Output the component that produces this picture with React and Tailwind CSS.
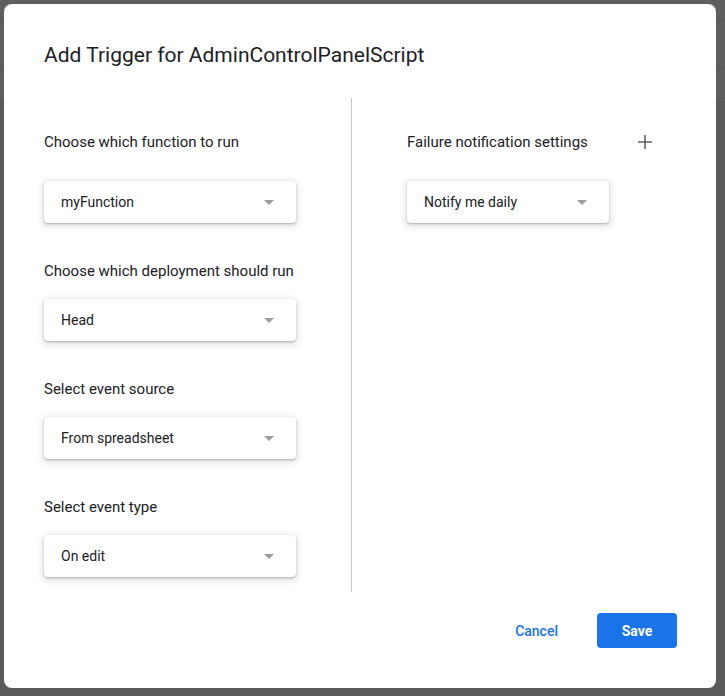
import React from "react";

const fields = [
  { label: "Choose which function to run", value: "myFunction" },
  { label: "Choose which deployment should run", value: "Head" },
  { label: "Select event source", value: "From spreadsheet" },
  { label: "Select event type", value: "On edit" },
];

function Select({ value, width }) {
  return (
    <div
      className={`flex h-[42px] ${width} items-center justify-between rounded-[4px] bg-white pl-[17px] pr-[22px] shadow-[0_1px_2px_rgba(60,64,67,0.3),0_2px_6px_2px_rgba(60,64,67,0.15)]`}
    >
      <span className="text-[14px] text-[#202124]">{value}</span>
      <span className="h-0 w-0 border-x-[5px] border-t-[5px] border-x-transparent border-t-[#9e9e9e]" />
    </div>
  );
}

export default function App() {
  return (
    <div className="relative h-[696px] w-[725px] overflow-hidden bg-[#5f5f5f] font-['Roboto',sans-serif]">
      {/* page behind the overlay */}
      <div className="h-[19px]" />
      <div className="h-[49px] border-t border-[#575757]" />
      <div className="h-[33px] border-t border-[#575757]" />
      <div className="h-[595px] border-t border-[#575757] bg-[#5a5a5a]" />

      <div className="absolute left-[4px] top-[4px] flex h-[684px] w-[712px] flex-col rounded-[8px] bg-white">
        <h1 className="pl-10 pt-[37px] text-[21px] leading-[28px] text-[#202124]">
          Add Trigger for AdminControlPanelScript
        </h1>

        <div className="mt-[29px] flex">
          <div className="w-[347px] shrink-0 pl-10">
            {fields.map((f, i) => (
              <div key={f.label} className={i === 0 ? "" : "mt-[38px]"}>
                <p
                  className={`text-[15px] leading-[20px] text-[#202124] ${
                    i === 0 ? "mt-[34px] mb-[29px]" : "mb-[18px]"
                  }`}
                >
                  {f.label}
                </p>
                <Select value={f.value} width="w-[252px]" />
              </div>
            ))}
          </div>

          <div className="h-[494px] w-px shrink-0 bg-[#c8c8c8]" />

          <div className="pl-[55px]">
            <div className="mt-[34px] mb-[29px] flex w-[250px] items-center justify-between">
              <p className="text-[15px] leading-[20px] text-[#202124]">
                Failure notification settings
              </p>
              <svg width="14" height="14" viewBox="0 0 14 14" className="mr-[5px]">
                <path d="M7 0v14M0 7h14" stroke="#5f6368" strokeWidth="1.6" />
              </svg>
            </div>
            <Select value="Notify me daily" width="w-[202px]" />
          </div>
        </div>

        <div className="mt-[21px] flex items-center justify-end gap-[23px] pr-[39px]">
          <button className="h-[35px] px-4 pt-px text-[14px] font-medium text-[#1a73e8]">
            Cancel
          </button>
          <button className="h-[35px] w-[80px] rounded-[4px] bg-[#1a73e8] pt-px text-[14px] font-bold text-white">
            Save
          </button>
        </div>
      </div>
    </div>
  );
}
